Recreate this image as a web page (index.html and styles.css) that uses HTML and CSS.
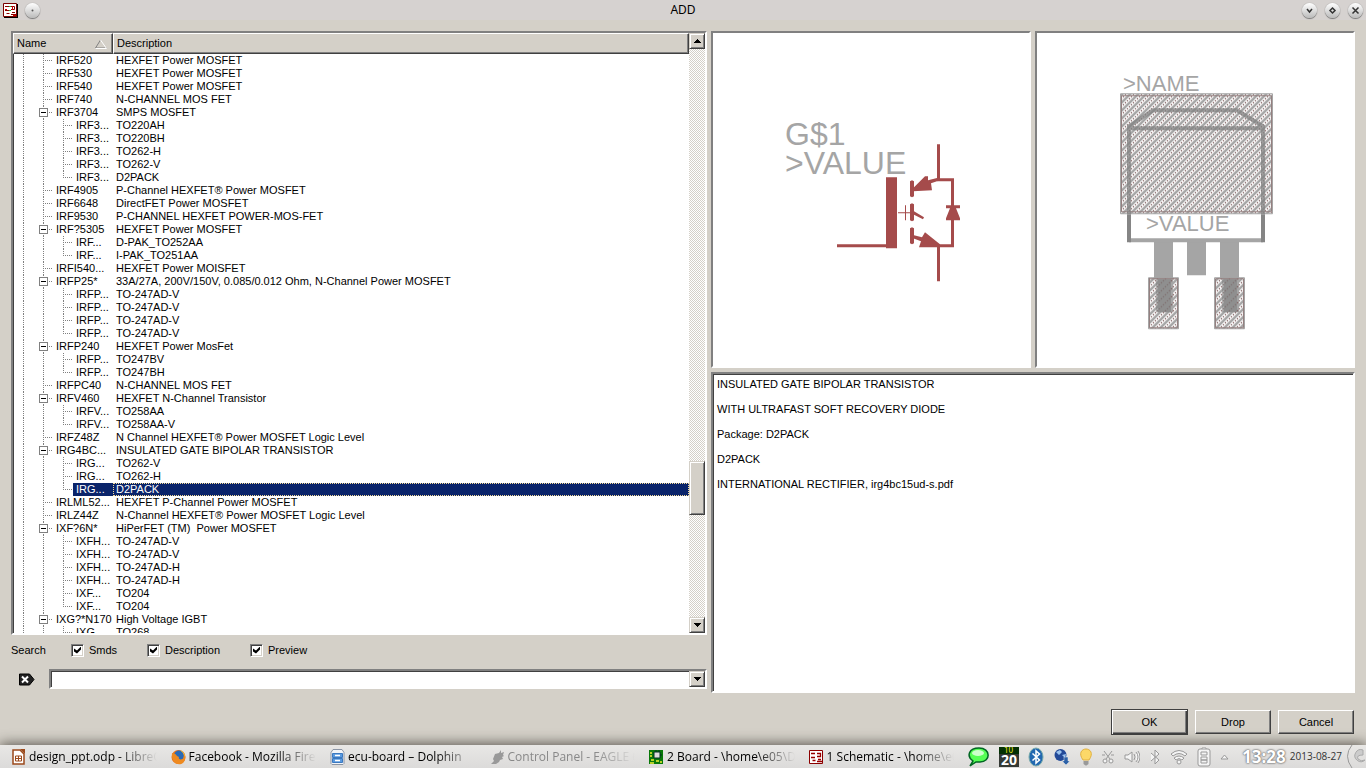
FILE: index.html
```html
<!DOCTYPE html>
<html lang="en">
<head>
<meta charset="utf-8">
<title>ADD</title>
<link rel="stylesheet" href="styles.css">
</head>
<body>
<header class="titlebar">
  <div class="title-side">
    <svg class="app-icon" width="15" height="15" viewBox="0 0 15 15" aria-hidden="true"><path d="M1 1h14v14H1z" fill="#000"/><path d="M.5.5h13v13H.5z" fill="#fff" stroke="#7a0000"/><path d="M2 3.500h4M2 7.500h4M8 3.500h3.500v3H8M3.500 10.500h3M12 9.500h-3M8 11.500h5" stroke="#8b0000" fill="none"/><path d="M2 6.500h2M9.500 3v4M10 12.500h3" stroke="#c00" fill="none"/><path d="M6 3.500h2M6 7.500h2" stroke="#3a3"/></svg>
    <button class="orb" aria-label="Pin"><svg width="15" height="15" viewBox="0 0 15 15"><circle cx="7.500" cy="7.500" r="1" fill="#555"/></svg></button>
  </div>
  <h1 class="title">ADD</h1>
  <div class="title-side title-end">
    <button class="orb" aria-label="Minimize"><svg width="15" height="15" viewBox="0 0 15 15"><path d="M5 6l2.500 3L10 6" fill="none" stroke="#333" stroke-width="1.500"/></svg></button>
    <button class="orb" aria-label="Maximize"><svg width="15" height="15" viewBox="0 0 15 15"><path d="M7.500 5L10 7.500 7.500 10 5 7.500z" fill="none" stroke="#333" stroke-width="1.500"/></svg></button>
    <button class="orb" aria-label="Close"><svg width="15" height="15" viewBox="0 0 15 15"><path d="M4.500 4.500l6 6m0-6l-6 6" stroke="#333" stroke-width="1.500"/></svg></button>
  </div>
</header>

<main class="dialog">
  <div class="left">
    <div class="tree-box sunken">
      <div class="tree-view">
        <table class="tree">
          <colgroup><col class="col-name"><col></colgroup>
          <thead><tr><th scope="col"><span class="head">Name<svg width="14" height="10" viewBox="0 0 14 10" aria-hidden="true"><path d="M12.500 9H1.500L6.500 1" fill="none" stroke="#808080"/><path d="M6.500 1l6 8.500H1.500" fill="none" stroke="#fff"/></svg></span></th><th scope="col"><span class="head">Description</span></th></tr></thead>
          <tbody>
            <tr><td><div class="n"><i class="g v"></i><i class="g t"></i><span>IRF520</span></div></td><td>HEXFET Power MOSFET</td></tr>
            <tr><td><div class="n"><i class="g v"></i><i class="g t"></i><span>IRF530</span></div></td><td>HEXFET Power MOSFET</td></tr>
            <tr><td><div class="n"><i class="g v"></i><i class="g t"></i><span>IRF540</span></div></td><td>HEXFET Power MOSFET</td></tr>
            <tr><td><div class="n"><i class="g v"></i><i class="g t"></i><span>IRF740</span></div></td><td>N-CHANNEL MOS FET</td></tr>
            <tr><td><div class="n"><i class="g v"></i><button class="g t m" aria-label="Collapse IRF3704"></button><span>IRF3704</span></div></td><td>SMPS MOSFET</td></tr>
            <tr><td><div class="n"><i class="g v"></i><i class="g v"></i><i class="g t"></i><span>IRF3...</span></div></td><td>TO220AH</td></tr>
            <tr><td><div class="n"><i class="g v"></i><i class="g v"></i><i class="g t"></i><span>IRF3...</span></div></td><td>TO220BH</td></tr>
            <tr><td><div class="n"><i class="g v"></i><i class="g v"></i><i class="g t"></i><span>IRF3...</span></div></td><td>TO262-H</td></tr>
            <tr><td><div class="n"><i class="g v"></i><i class="g v"></i><i class="g t"></i><span>IRF3...</span></div></td><td>TO262-V</td></tr>
            <tr><td><div class="n"><i class="g v"></i><i class="g v"></i><i class="g l"></i><span>IRF3...</span></div></td><td>D2PACK</td></tr>
            <tr><td><div class="n"><i class="g v"></i><i class="g t"></i><span>IRF4905</span></div></td><td>P-Channel HEXFET® Power MOSFET</td></tr>
            <tr><td><div class="n"><i class="g v"></i><i class="g t"></i><span>IRF6648</span></div></td><td>DirectFET Power MOSFET</td></tr>
            <tr><td><div class="n"><i class="g v"></i><i class="g t"></i><span>IRF9530</span></div></td><td>P-CHANNEL HEXFET POWER-MOS-FET</td></tr>
            <tr><td><div class="n"><i class="g v"></i><button class="g t m" aria-label="Collapse IRF?5305"></button><span>IRF?5305</span></div></td><td>HEXFET Power MOSFET</td></tr>
            <tr><td><div class="n"><i class="g v"></i><i class="g v"></i><i class="g t"></i><span>IRF...</span></div></td><td>D-PAK_TO252AA</td></tr>
            <tr><td><div class="n"><i class="g v"></i><i class="g v"></i><i class="g l"></i><span>IRF...</span></div></td><td>I-PAK_TO251AA</td></tr>
            <tr><td><div class="n"><i class="g v"></i><i class="g t"></i><span>IRFI540...</span></div></td><td>HEXFET Power MOISFET</td></tr>
            <tr><td><div class="n"><i class="g v"></i><button class="g t m" aria-label="Collapse IRFP25*"></button><span>IRFP25*</span></div></td><td>33A/27A, 200V/150V, 0.085/0.012 Ohm, N-Channel Power MOSFET</td></tr>
            <tr><td><div class="n"><i class="g v"></i><i class="g v"></i><i class="g t"></i><span>IRFP...</span></div></td><td>TO-247AD-V</td></tr>
            <tr><td><div class="n"><i class="g v"></i><i class="g v"></i><i class="g t"></i><span>IRFP...</span></div></td><td>TO-247AD-V</td></tr>
            <tr><td><div class="n"><i class="g v"></i><i class="g v"></i><i class="g t"></i><span>IRFP...</span></div></td><td>TO-247AD-V</td></tr>
            <tr><td><div class="n"><i class="g v"></i><i class="g v"></i><i class="g l"></i><span>IRFP...</span></div></td><td>TO-247AD-V</td></tr>
            <tr><td><div class="n"><i class="g v"></i><button class="g t m" aria-label="Collapse IRFP240"></button><span>IRFP240</span></div></td><td>HEXFET Power MosFet</td></tr>
            <tr><td><div class="n"><i class="g v"></i><i class="g v"></i><i class="g t"></i><span>IRFP...</span></div></td><td>TO247BV</td></tr>
            <tr><td><div class="n"><i class="g v"></i><i class="g v"></i><i class="g l"></i><span>IRFP...</span></div></td><td>TO247BH</td></tr>
            <tr><td><div class="n"><i class="g v"></i><i class="g t"></i><span>IRFPC40</span></div></td><td>N-CHANNEL MOS FET</td></tr>
            <tr><td><div class="n"><i class="g v"></i><button class="g t m" aria-label="Collapse IRFV460"></button><span>IRFV460</span></div></td><td>HEXFET N-Channel Transistor</td></tr>
            <tr><td><div class="n"><i class="g v"></i><i class="g v"></i><i class="g t"></i><span>IRFV...</span></div></td><td>TO258AA</td></tr>
            <tr><td><div class="n"><i class="g v"></i><i class="g v"></i><i class="g l"></i><span>IRFV...</span></div></td><td>TO258AA-V</td></tr>
            <tr><td><div class="n"><i class="g v"></i><i class="g t"></i><span>IRFZ48Z</span></div></td><td>N Channel HEXFET® Power MOSFET Logic Level</td></tr>
            <tr><td><div class="n"><i class="g v"></i><button class="g t m" aria-label="Collapse IRG4BC"></button><span>IRG4BC...</span></div></td><td>INSULATED GATE BIPOLAR TRANSISTOR</td></tr>
            <tr><td><div class="n"><i class="g v"></i><i class="g v"></i><i class="g t"></i><span>IRG...</span></div></td><td>TO262-V</td></tr>
            <tr><td><div class="n"><i class="g v"></i><i class="g v"></i><i class="g t"></i><span>IRG...</span></div></td><td>TO262-H</td></tr>
            <tr class="selected"><td><div class="n"><i class="g v"></i><i class="g v"></i><i class="g l"></i><span>IRG...</span></div></td><td>D2PACK</td></tr>
            <tr><td><div class="n"><i class="g v"></i><i class="g t"></i><span>IRLML52...</span></div></td><td>HEXFET P-Channel Power MOSFET</td></tr>
            <tr><td><div class="n"><i class="g v"></i><i class="g t"></i><span>IRLZ44Z</span></div></td><td>N-Channel HEXFET® Power MOSFET Logic Level</td></tr>
            <tr><td><div class="n"><i class="g v"></i><button class="g t m" aria-label="Collapse IXF?6N*"></button><span>IXF?6N*</span></div></td><td>HiPerFET (TM)&nbsp; Power MOSFET</td></tr>
            <tr><td><div class="n"><i class="g v"></i><i class="g v"></i><i class="g t"></i><span>IXFH...</span></div></td><td>TO-247AD-V</td></tr>
            <tr><td><div class="n"><i class="g v"></i><i class="g v"></i><i class="g t"></i><span>IXFH...</span></div></td><td>TO-247AD-V</td></tr>
            <tr><td><div class="n"><i class="g v"></i><i class="g v"></i><i class="g t"></i><span>IXFH...</span></div></td><td>TO-247AD-H</td></tr>
            <tr><td><div class="n"><i class="g v"></i><i class="g v"></i><i class="g t"></i><span>IXFH...</span></div></td><td>TO-247AD-H</td></tr>
            <tr><td><div class="n"><i class="g v"></i><i class="g v"></i><i class="g t"></i><span>IXF...</span></div></td><td>TO204</td></tr>
            <tr><td><div class="n"><i class="g v"></i><i class="g v"></i><i class="g l"></i><span>IXF...</span></div></td><td>TO204</td></tr>
            <tr><td><div class="n"><i class="g v"></i><button class="g t m" aria-label="Collapse IXG?*N170"></button><span>IXG?*N170</span></div></td><td>High Voltage IGBT</td></tr>
            <tr><td><div class="n"><i class="g v"></i><i class="g v"></i><i class="g l"></i><span>IXG...</span></div></td><td>TO268</td></tr>
          </tbody>
        </table>
      </div>
      <div class="scrollbar">
        <button class="sq" aria-label="Scroll up"><svg width="7" height="4" viewBox="0 0 7 4"><path d="M3 0h1v1h1v1h1v1h1v1H0V3h1V2h1V1h1z"/></svg></button>
        <div class="above"></div>
        <div class="thumb"></div>
        <div class="below"></div>
        <button class="sq" aria-label="Scroll down"><svg width="7" height="4" viewBox="0 0 7 4"><path d="M0 0h7v1H6v1H5v1H4v1H3V3H2V2H1V1H0z"/></svg></button>
      </div>
    </div>
    <div class="options">
      <label class="search-label" for="query">Search</label>
      <label class="opt opt-smds"><input type="checkbox" checked>Smds</label>
      <label class="opt opt-desc"><input type="checkbox" checked>Description</label>
      <label class="opt"><input type="checkbox" checked>Preview</label>
    </div>
    <div class="query-row">
      <button class="clear" aria-label="Clear search"><svg width="16" height="13" viewBox="0 0 16 13"><path d="M.5 1h10l4.500 5.500-4.500 5.500H.5z" fill="#222" stroke="#000"/><path d="M3 3.500l6 6m0-6l-6 6" stroke="#fff" stroke-width="2"/></svg></button>
      <div class="combo sunken"><input id="query" type="text"><button class="sq" aria-label="Search history"><svg width="7" height="4" viewBox="0 0 7 4"><path d="M0 0h7v1H6v1H5v1H4v1H3V3H2V2H1V1H0z"/></svg></button></div>
    </div>
  </div>

  <div class="right">
    <div class="previews">
      <div class="preview">
        <svg viewBox="713 33 316 332" role="img" aria-label="Schematic symbol">
          <g fill="#a5a5a5" font-size="32"><text x="785" y="145">G$1</text><text x="785" y="174">&gt;VALUE</text></g>
          <g fill="#a54b4b">
            <path d="M886 177h11v71h-11zM837 244h50v3h-50zM910 181l2-1 2 1v15l-2 1-2-1zM910 204l2-1 2 1v16l-2 1-2-1zM910 228l2-1 2 1v15l-2 1-2-1z"/>
            <path d="M937 144h3v34h14v69h-14v34h-3v-37h14v-63h-14z"/>
            <path d="M913 188l12-12h3v4l12-3v3l-9 3 1 7-19 1zM914 211l10 6-1 2-10-5zM914 235l8 2 3-5 15 12v3h-21l2-6-8-3z"/>
            <path d="M946 205h14v3h-4l4 10v2h-14v-2l4-10h-4z"/>
            <path d="M898 212h12v1h-12zM905 205h1v15h-1z"/>
          </g>
        </svg>
      </div>
      <div class="preview">
        <svg viewBox="1037 33 316 332" role="img" aria-label="Package footprint">
          <defs><pattern id="hatch" width="8" height="8" patternUnits="userSpaceOnUse"><path d="M-2 2l4-4M-2 10L10-2M6 10l4-4" stroke="#a5a5a5" stroke-width="2.500"/><path d="M-1 5l6-6M3 9l6-6" stroke="#806060" stroke-width="1.200" stroke-dasharray="1.400"/></pattern></defs>
          <path d="M1154 241h19v71h-15v-33h-4zM1187 241h19v34h-19zM1220 241h19v71h-15v-33h-4zM1154 241h19v38h-19zM1220 241h19v38h-19z" fill="#a5a5a5"/>
          <path d="M1129 240h134" stroke="#a5a5a5" stroke-width="4"/>
          <path d="M1129 242V214M1263 242V214" fill="none" stroke="#858585" stroke-width="4"/>
          <g fill="url(#hatch)" stroke="#a5a5a5"><path d="M1120.500 93.500h152v120h-152zM1148.500 277.500h30v51h-30zM1214.500 277.500h30v51h-30z"/></g>
          <path d="M1121.500 95.500h150v116h-150zM1149.500 278.500h28v49h-28zM1215.500 278.500h28v49h-28z" fill="none" stroke="#958080"/>
          <path d="M1156 279h15v33h-15zM1222 279h15v33h-15z" fill="#808080" opacity=".6"/>
          <path d="M1129 214V126l24-16h84l26 16v88M1129 128h134" fill="none" stroke="#808080" stroke-width="4" opacity=".75"/>
          <g fill="#a5a5a5" font-size="22"><text x="1123" y="91">&gt;NAME</text><text x="1146" y="231">&gt;VALUE</text></g>
        </svg>
      </div>
    </div>
    <div class="details sunken">
      <p>INSULATED GATE BIPOLAR TRANSISTOR</p>
      <p>WITH ULTRAFAST SOFT RECOVERY DIODE</p>
      <p>Package: D2PACK</p>
      <p>D2PACK</p>
      <p>INTERNATIONAL RECTIFIER, irg4bc15ud-s.pdf</p>
    </div>
  </div>
</main>

<div class="actions">
  <button class="btn btn-default">OK</button>
  <button class="btn">Drop</button>
  <button class="btn">Cancel</button>
</div>

<footer class="taskbar">
  <nav class="tasks" aria-label="Windows">
    <button class="task"><svg width="15" height="16" viewBox="0 0 15 16"><path d="M2 1h7l4 4v10H2z" fill="#fff" stroke="#9c4a1c" stroke-width="1.500"/><path d="M9 0h5v5z" fill="#9c4a1c"/><path d="M4.500 7h6v5h-6zM5 9.500h5M7.500 7v5" fill="none" stroke="#9c4a1c"/></svg><span>design_ppt.odp - LibreOffice</span></button>
    <button class="task"><svg width="15" height="16" viewBox="0 0 15 16"><circle cx="7.500" cy="8" r="7" fill="#e8701a"/><circle cx="8" cy="6.500" r="5" fill="#2a6ab5"/><path d="M1 4c2 0 4 1 5 3l2 1c-1 2 1 3 4 2 1-2 1-5 0-7 3 3 3 8 0 11-4 3-12 1-11-10z" fill="#ee8a20"/><path d="M9 1c3 1 5 4 5 7l-2-4z" fill="#f8c83a"/></svg><span>Facebook - Mozilla Firefox</span></button>
    <button class="task"><svg width="15" height="16" viewBox="0 0 15 16"><path d="M3 .5h9l2 3v11l-1 1H2l-1-1v-11z" fill="#f2f4f8" stroke="#8a94a4"/><path d="M2.500 4.500h10v4h-10zM2.500 9.500h10v4h-10z" fill="#5a9ae0" stroke="#3a78c0"/><path d="M5 6.500h5M5 11.500h5" stroke="#fff" stroke-width="1.500"/></svg><span>ecu-board – Dolphin</span></button>
    <button class="task task-dim"><svg width="15" height="14" viewBox="0 0 15 14"><path d="M3 9l2-5 4-1 2-3v3l3-1-1 3 1 1-2 1 1 2-3 1-1 2-3 2H1l3-3z" fill="#999"/></svg><span>Control Panel - EAGLE 6.4.0</span></button>
    <button class="task"><svg width="15" height="14" viewBox="0 0 15 14"><path d="M0 0h14v14H0z" fill="#087808"/><path d="M5 2h6v6H5z" fill="#ddd"/><path d="M5 2h6v6H5zM7 0v2M10 0v2M11 5h2" fill="none" stroke="#032"/><path d="M1 3h2M1 6h2M2 10h3M7 11h3M11 12h2M1 13h4" stroke="#ee3" stroke-width="1.500"/></svg><span>2 Board - \home\e05\Desktop</span></button>
    <button class="task"><svg width="15" height="14" viewBox="0 0 15 14"><path d="M.5.5h13v13H.5z" fill="#fff" stroke="#8b0000"/><path d="M2 3.500h4M2 7.500h4M8 3.500h3.500v3H8M3.500 10.500h3M12 9.500h-3M8 11.500h5" stroke="#900" stroke-width="1.300" fill="none"/></svg><span>1 Schematic - \home\e05\Des</span></button>
  </nav>
  <div class="tray">
    <svg width="22" height="22" viewBox="0 0 22 22" aria-hidden="true"><path d="M11 2c12 0 12 14 1 14-2 0-3 0-4 0l-6 4 3-5C-2 10 1 2 11 2z" fill="#5f5" stroke="#062" stroke-width="1.500"/><ellipse cx="10" cy="7" rx="6" ry="3" fill="#cfc"/></svg>
    <svg width="20" height="20" viewBox="0 0 20 20" aria-hidden="true"><path d="M0 0h20v20H0z" fill="#353a35"/><path d="M0 0h20v7H0z" fill="#043004"/><text x="5" y="6" font-size="8" fill="#ee2">10</text><text x="2" y="18" font-size="14" font-weight="bold" fill="#fff">20</text></svg>
    <svg width="16" height="20" viewBox="0 0 16 20" aria-hidden="true"><ellipse cx="8" cy="10" rx="7" ry="9" fill="#2268b0" stroke="#7aa"/><path d="M4.500 6.500l7 6.500L8 16V4l3.500 3-7 6.500" fill="none" stroke="#fff" stroke-width="1.500"/></svg>
    <svg width="18" height="18" viewBox="0 0 18 18" aria-hidden="true"><circle cx="7.500" cy="7" r="6" fill="#234a98"/><path d="M3 4l4-2 2 2-3 3zM9 7l4-1-1 4z" fill="#9cc4f0"/><path d="M11 9h4v4h2l-4 4-4-4h2z" fill="#2d62a8" stroke="#eee" stroke-width=".5"/></svg>
    <svg width="12" height="18" viewBox="0 0 12 18" aria-hidden="true"><path d="M3 12C-2 5 2 1 6 1s8 4 3 11z" fill="#fcd868" stroke="#e0b040"/><path d="M3.500 13h5v3l-2 1.500h-1l-2-1.500z" fill="#999"/></svg>
    <svg class="mono" width="14" height="16" viewBox="0 0 14 16" aria-hidden="true"><circle cx="4" cy="12" r="2"/><circle cx="10" cy="12" r="2"/><path d="M5 10l6-8M9 10L3 2M1 6h3M10 6h3"/></svg>
    <svg class="mono" width="16" height="16" viewBox="0 0 16 16" aria-hidden="true"><path d="M1 6h3l4-3v10l-4-3H1zM10 5q2 3 0 6M12 3q4 5 0 10M14 2q4 6 0 12"/></svg>
    <svg class="mono" width="12" height="16" viewBox="0 0 12 16" aria-hidden="true"><path d="M2 4l8 7-4 4V1l4 4-8 7"/></svg>
    <svg class="mono" width="18" height="16" viewBox="0 0 18 16" aria-hidden="true"><path d="M1 5q8-7 16 0l-2 2q-6-5-12 0zM4 9q5-4 10 0l-2 2q-3-3-6 0z"/><circle cx="9" cy="13" r="2"/></svg>
    <svg class="mono" width="14" height="20" viewBox="0 0 14 20" aria-hidden="true"><rect x="1" y="2" width="12" height="17" rx="2"/><path d="M5 2V1h4v1M4 5h6v3H4zM4 10h6v3H4zM4 13h6v3H4z"/></svg>
    <svg class="mono" width="9" height="8" viewBox="0 0 9 8" aria-hidden="true"><path d="M1 6l3.500-4L8 6z"/></svg>
  </div>
  <div class="tray-end">
    <time class="clock">13:28</time>
    <time class="date">2013-08-27</time>
    <button class="cashew" aria-label="Panel tools"><svg width="20" height="23" viewBox="0 0 20 23"><path d="M6 0Q-3 11 6 23" fill="none" stroke="#999"/><path d="M17 5a6 6 0 1 0 2 10q-4 2-7-1-2-4 5-4z" fill="#ccc" stroke="#aaa"/></svg></button>
  </div>
</footer>
</body>
</html>
```
FILE: styles.css
```css
*, ::before, ::after { box-sizing: border-box; }

body {
  margin: 0;
  min-height: 100vh;
  display: flex;
  flex-direction: column;
  overflow: hidden;
  background: #d4d0c8;
  color: #000;
  font: 11px/13px "Liberation Sans", Arial, sans-serif;
}

button, input { font: inherit; color: inherit; margin: 0; }
button { padding: 0; border: 0; background: none; }
svg { flex: none; }

/* Title bar */
.titlebar {
  display: flex;
  align-items: center;
  height: 20px;
  padding: 0 3px;
  background: #d6d2d0;
}
.title-side { flex: 1; display: flex; align-items: center; gap: 7px; }
.title-end { justify-content: flex-end; gap: 8px; }
.title {
  margin: 0;
  font: 12px/20px "Noto Sans", sans-serif;
}
.orb {
  width: 15px;
  height: 15px;
  border-radius: 50%;
  background: linear-gradient(#fff, #bbb);
  box-shadow: 0 1px 1px #777, 0 0 1px #888;
}
.orb svg { display: block; }

/* Shared bevels */
.sunken {
  border: 2px solid;
  border-color: #808080 #fff #fff #808080;
  box-shadow: inset 1px 1px 0 #404040;
  background: #fff;
}
.sq, .thumb {
  width: 16px;
  background: #d4d0c8;
  border: 1px solid;
  border-color: #d4d0c8 #404040 #404040 #d4d0c8;
  box-shadow: inset 1px 1px 0 #fff, inset -1px -1px 0 #808080;
}
.sq {
  height: 16px;
  display: flex;
  align-items: center;
  justify-content: center;
  flex: none;
}

/* Dialog body */
.dialog {
  flex: 1;
  min-height: 0;
  display: grid;
  grid-template-columns: 696fr 644fr;
  gap: 4px;
  padding: 11px 11px 0;
}
.left { display: flex; flex-direction: column; min-height: 0; min-width: 0; }

.tree-box { flex: 1; min-height: 0; display: flex; }
.tree-view { flex: 1; min-width: 0; overflow: hidden; contain: size; }
.tree { width: 100%; border-collapse: collapse; table-layout: fixed; }
.col-name { width: 100px; }
.tree th, .tree td {
  padding: 0;
  text-align: left;
  font-weight: normal;
  white-space: nowrap;
}
.head {
  display: flex;
  align-items: center;
  justify-content: space-between;
  height: 21px;
  padding: 0 4px 0 3px;
  background: #d4d0c8;
  border: 1px solid;
  border-color: #fff #404040 #404040 #fff;
  box-shadow: inset -1px -1px 0 #808080;
}
.tree td { height: 13px; line-height: 13px; }
.tree td + td { padding-left: 3px; }

.n { display: flex; height: 13px; }
.n span { flex: 1; padding-left: 3px; overflow: hidden; }
.g {
  position: relative;
  width: 20px;
  flex: none;
  background-repeat: no-repeat;
}
.v, .t, .l {
  background-image: repeating-linear-gradient(#808080 0 1px, #fff 1px 2px);
  background-size: 1px 13px;
  background-position: 10px 0;
}
.l { background-size: 1px 7px; }
.t::before, .l::before {
  content: "";
  position: absolute;
  left: 10px;
  top: 6px;
  width: 9px;
  height: 1px;
  background: repeating-linear-gradient(90deg, #808080 0 1px, #fff 1px 2px);
}
.m::after {
  content: "";
  position: absolute;
  left: 6px;
  top: 2px;
  width: 9px;
  height: 9px;
  border: 1px solid #808080;
  background: linear-gradient(#000, #000) center / 5px 1px no-repeat #fff;
}
.selected span { background: #0a246a; color: #fff; }
.selected td + td {
  background: #0a246a;
  color: #fff;
  outline: 1px dotted #f5db95;
  outline-offset: -1px;
}

.scrollbar {
  width: 16px;
  flex: none;
  display: flex;
  flex-direction: column;
  background: repeating-conic-gradient(#fff 0 25%, #d4d0c8 0 50%) 0 0 / 2px 2px;
}
.above { flex: 412; }
.thumb { height: 54px; }
.below { flex: 102; }

.options { display: flex; align-items: center; height: 30px; }
.search-label { width: 60px; }
.opt { display: flex; align-items: center; gap: 5px; }
.opt-smds { width: 76px; }
.opt-desc { width: 103px; }
.opt input {
  appearance: none;
  width: 13px;
  height: 13px;
  border: 1px solid;
  border-color: #808080 #fff #fff #808080;
  box-shadow: inset 1px 1px 0 #404040, inset -1px -1px 0 #d4d0c8;
  background: #fff;
  display: grid;
  place-items: center;
}
.opt input:checked::before {
  content: "";
  width: 7px;
  height: 7px;
  background: #000;
  clip-path: polygon(0 28%, 43% 58%, 100% 0, 100% 43%, 43% 100%, 0 71%);
}

.query-row { display: flex; align-items: center; padding: 4px 0; }
.clear { width: 38px; height: 13px; padding-left: 8px; text-align: left; }
.clear svg { display: block; }
.combo { flex: 1; display: flex; height: 20px; }
.combo input {
  flex: 1;
  min-width: 0;
  border: 0;
  padding: 0 3px;
  background: transparent;
  outline: 0;
}

.right {
  display: grid;
  grid-template-rows: minmax(0, 336fr) minmax(0, 321fr);
  gap: 4px;
  min-width: 0;
  min-height: 0;
}
.previews { display: grid; grid-template-columns: 1fr 1fr; gap: 4px; min-height: 0; }
.preview {
  min-height: 0;
  min-width: 0;
  background: #fff;
  border: 2px solid;
  border-color: #808080 #fff #fff #808080;
}
.preview svg { display: block; width: 100%; height: 100%; }
.details { padding: 4px; }
.details p { margin: 0 0 12px; }

.actions {
  display: flex;
  align-items: center;
  justify-content: flex-end;
  gap: 7px;
  padding: 16px 12px 10px;
}
.btn {
  width: 76px;
  height: 24px;
  background: #d4d0c8;
  border: 1px solid;
  border-color: #fff #404040 #404040 #fff;
  box-shadow: inset -1px -1px 0 #808080;
}
.btn-default {
  width: 77px;
  height: 26px;
  border-color: #404040;
  box-shadow: inset 1px 1px 0 #fff, inset -1px -1px 0 #404040, inset -2px -2px 0 #808080;
}

/* Desktop panel */
.taskbar {
  position: relative;
  display: flex;
  gap: 13px;
  height: 23px;
  background: linear-gradient(#e8e7e5, #dcdbda);
  box-shadow: 0 -1px 13px rgba(40, 36, 30, .75);
  font: 12px/23px "Open Sans", "Noto Sans", sans-serif;
}
.tasks {
  flex: 1;
  min-width: 0;
  display: grid;
  grid-template-columns: repeat(6, minmax(0, 1fr));
  margin-right: -13px;
  padding-left: 11px;
}
.task {
  display: flex;
  align-items: center;
  gap: 3px;
  min-width: 0;
  padding-right: 14px;
  text-align: left;
}
.task span {
  flex: 1;
  overflow: hidden;
  white-space: nowrap;
  mask-image: linear-gradient(90deg, #000 calc(100% - 40px), transparent);
}
.task-dim { color: #888; }
.tray { display: flex; align-items: center; gap: 9px; }
.tray-end { display: flex; align-items: center; gap: 4px; }
.tray svg { font-family: "Noto Sans", sans-serif; }
.mono { fill: #f4f4f4; stroke: #999; stroke-width: 1; }
.clock {
  font: bold 17px/23px "Noto Sans", sans-serif;
  color: #fff;
  text-shadow: 0 0 2px #555, 0 0 2px #777;
}
.date { font-size: 10px; color: #333; }
.cashew { width: 20px; height: 23px; }
.cashew svg { display: block; }
```
